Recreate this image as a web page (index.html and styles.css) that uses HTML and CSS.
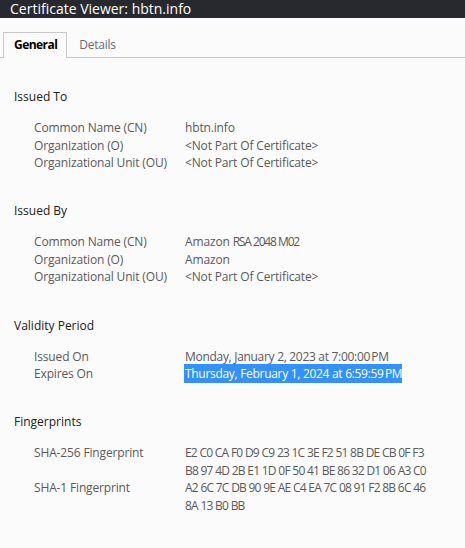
FILE: index.html
```html
<!DOCTYPE html>
<html>
<head>
<meta charset="utf-8">
<link rel="stylesheet" href="styles.css">
</head>
<body>
<div class="titlebar">Certificate Viewer: hbtn.info</div>
<div class="tabs">
  <div class="tab active">General</div>
  <div class="tab">Details</div>
</div>
<div class="content">
  <section class="section">
    <h2 class="heading">Issued To</h2>
    <div class="grid">
      <div class="label">Common Name (CN)</div><div class="value">hbtn.info</div>
      <div class="label">Organization (O)</div><div class="value">&lt;Not Part Of Certificate&gt;</div>
      <div class="label">Organizational Unit (OU)</div><div class="value">&lt;Not Part Of Certificate&gt;</div>
    </div>
  </section>
  <section class="section">
    <h2 class="heading">Issued By</h2>
    <div class="grid">
      <div class="label">Common Name (CN)</div><div class="value">Amazon <span class="tight">RSA 2048 M02</span></div>
      <div class="label">Organization (O)</div><div class="value">Amazon</div>
      <div class="label">Organizational Unit (OU)</div><div class="value">&lt;Not Part Of Certificate&gt;</div>
    </div>
  </section>
  <section class="section">
    <h2 class="heading">Validity Period</h2>
    <div class="grid">
      <div class="label">Issued On</div><div class="value date">Monday, January 2, 2023 at 7:00:00&#8239;PM</div>
      <div class="label">Expires On</div><div class="value date"><span class="selected">Thursday, February 1, 2024 at 6:59:59&#8239;PM</span></div>
    </div>
  </section>
  <section class="section">
    <h2 class="heading">Fingerprints</h2>
    <div class="grid">
      <div class="label">SHA-256 Fingerprint</div><div class="value hex">E2 C0 CA F0 D9 C9 23 1C 3E F2 51 8B DE CB 0F F3<br>B8 97 4D 2B E1 1D 0F 50 41 BE 86 32 D1 06 A3 C0</div>
      <div class="label">SHA-1 Fingerprint</div><div class="value hex">A2 6C 7C DB 90 9E AE C4 EA 7C 08 91 F2 8B 6C 46<br>8A 13 B0 BB</div>
    </div>
  </section>
</div>
</body>
</html>
```

FILE: styles.css
```css
html, body {
  margin: 0;
  padding: 0;
  background: #fbfbfb;
  font-family: "Open Sans", "Noto Sans", sans-serif;
  height: 100%;
}
.titlebar {
  height: 18px;
  background: #28292e;
  color: #ffffff;
  font-size: 14px;
  line-height: 17px;
  padding-left: 10px;
  white-space: nowrap;
}
.tabs {
  display: flex;
  padding: 14px 0 0 3px;
  border-bottom: 1px solid #c8c8c8;
  height: 25px;
}
.tab {
  font-size: 12px;
  line-height: 24px;
  padding: 0 11px 0 11px;
  color: #6b6b6b;
  border: 1px solid transparent;
  border-bottom: none;
  letter-spacing: -0.25px;
}
.tab.active {
  color: #000;
  font-weight: bold;
  border-color: #c8c8c8;
  background: #fbfbfb;
  margin-bottom: -1px;
  height: 25px;
  padding: 0 9px 0 10px;
  letter-spacing: -0.55px;
}
.content {
  padding: 30px 0 0 14px;
}
.section {
  margin-bottom: 30.5px;
}
.heading {
  margin: 0 0 13.5px 0;
  font-size: 12px;
  font-weight: normal;
  line-height: 17.5px;
  color: #202020;
}
.grid {
  display: grid;
  grid-template-columns: 151px auto;
  padding-left: 20px;
  font-size: 12px;
  line-height: 17.6px;
  color: #5a5a5a;
  letter-spacing: -0.15px;
}
.label, .value {
  white-space: nowrap;
}
.date {
  letter-spacing: -0.3px;
}
.tight {
  letter-spacing: -1.2px;
  word-spacing: 0.5px;
}
.hex {
  letter-spacing: -0.82px;
  word-spacing: 0.3px;
}
.selected {
  background: #3390ff;
  color: #ffffff;
  padding: 1px 0 1px 1px;
  margin-left: -1px;
}
```
